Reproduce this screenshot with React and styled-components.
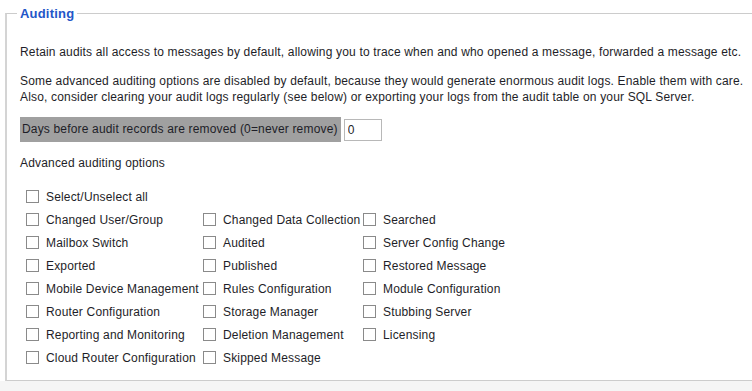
import React from "react";
import styled, { createGlobalStyle } from "styled-components";

const GlobalStyle = createGlobalStyle`
  html, body { margin: 0; padding: 0; background: #f5f5f5; }
  body { font-family: "Liberation Sans", Arial, sans-serif; font-size: 12px; letter-spacing: 0.17px; color: #1e1e28; }
`;

const Page = styled.div`
  background: #fff;
  padding: 6px 0 0 5px;
  overflow: hidden;
`;

const Fieldset = styled.fieldset`
  margin: 0 -20px 0 0;
  padding: 0 0 11px 13px;
  border: 1px solid #cccccc;
  border-left: 2px solid #d4d4d4;
  border-right: none;
  min-width: 0;
`;

const Legend = styled.legend`
  margin-left: -3px;
  padding: 0 3px;
  font-weight: bold;
  font-size: 13px;
  letter-spacing: 0.2px;
  color: #2356c8;
`;

const Para = styled.p`
  margin: ${(p) => p.$top}px 0 0;
  line-height: 16px;
`;

const DaysRow = styled.div`
  display: flex;
  align-items: center;
  gap: 3px;
  margin-top: 12px;
`;

const DaysLabel = styled.div`
  background: #a0a0a0;
  height: 25px;
  line-height: 25px;
  padding: 0 3px 0 2px;
  white-space: nowrap;
`;

const DaysInput = styled.input`
  box-sizing: border-box;
  width: 38px;
  height: 22px;
  border: 1px solid #b8b8b8;
  padding: 0 3px;
  font: inherit;
  color: inherit;
  outline: none;
`;

const SubHeading = styled.div`
  margin-top: 13px;
  line-height: 16px;
`;

const OptionGrid = styled.div`
  display: grid;
  grid-template-columns: 177px 160px auto;
  grid-auto-rows: 23px;
  margin-top: 14px;
  padding-left: 6px;
`;

const Option = styled.label`
  display: flex;
  align-items: center;
  gap: 7px;
  white-space: nowrap;
  grid-column: ${(p) => (p.$full ? "1 / -1" : "auto")};
`;

const Box = styled.span`
  box-sizing: border-box;
  width: 13px;
  height: 13px;
  border: 1px solid #8a8a8a;
  background: #fff;
  flex: none;
`;

const rows = [
  ["Changed User/Group", "Changed Data Collection", "Searched"],
  ["Mailbox Switch", "Audited", "Server Config Change"],
  ["Exported", "Published", "Restored Message"],
  ["Mobile Device Management", "Rules Configuration", "Module Configuration"],
  ["Router Configuration", "Storage Manager", "Stubbing Server"],
  ["Reporting and Monitoring", "Deletion Management", "Licensing"],
  ["Cloud Router Configuration", "Skipped Message", null],
];

export default function App() {
  return (
    <>
      <GlobalStyle />
      <Page>
        <Fieldset>
          <Legend>Auditing</Legend>
          <Para $top={23}>
            Retain audits all access to messages by default, allowing you to trace when and who opened a message, forwarded a message etc.
          </Para>
          <Para $top={13}>
            Some advanced auditing options are disabled by default, because they would generate enormous audit logs. Enable them with care.
            <br />
            Also, consider clearing your audit logs regularly (see below) or exporting your logs from the audit table on your SQL Server.
          </Para>
          <DaysRow>
            <DaysLabel>Days before audit records are removed (0=never remove)</DaysLabel>
            <DaysInput defaultValue="0" />
          </DaysRow>
          <SubHeading>Advanced auditing options</SubHeading>
          <OptionGrid>
            <Option $full>
              <Box />
              Select/Unselect all
            </Option>
            {rows.flat().map((t, i) =>
              t ? (
                <Option key={i}>
                  <Box />
                  {t}
                </Option>
              ) : (
                <span key={i} />
              )
            )}
          </OptionGrid>
        </Fieldset>
      </Page>
    </>
  );
}
